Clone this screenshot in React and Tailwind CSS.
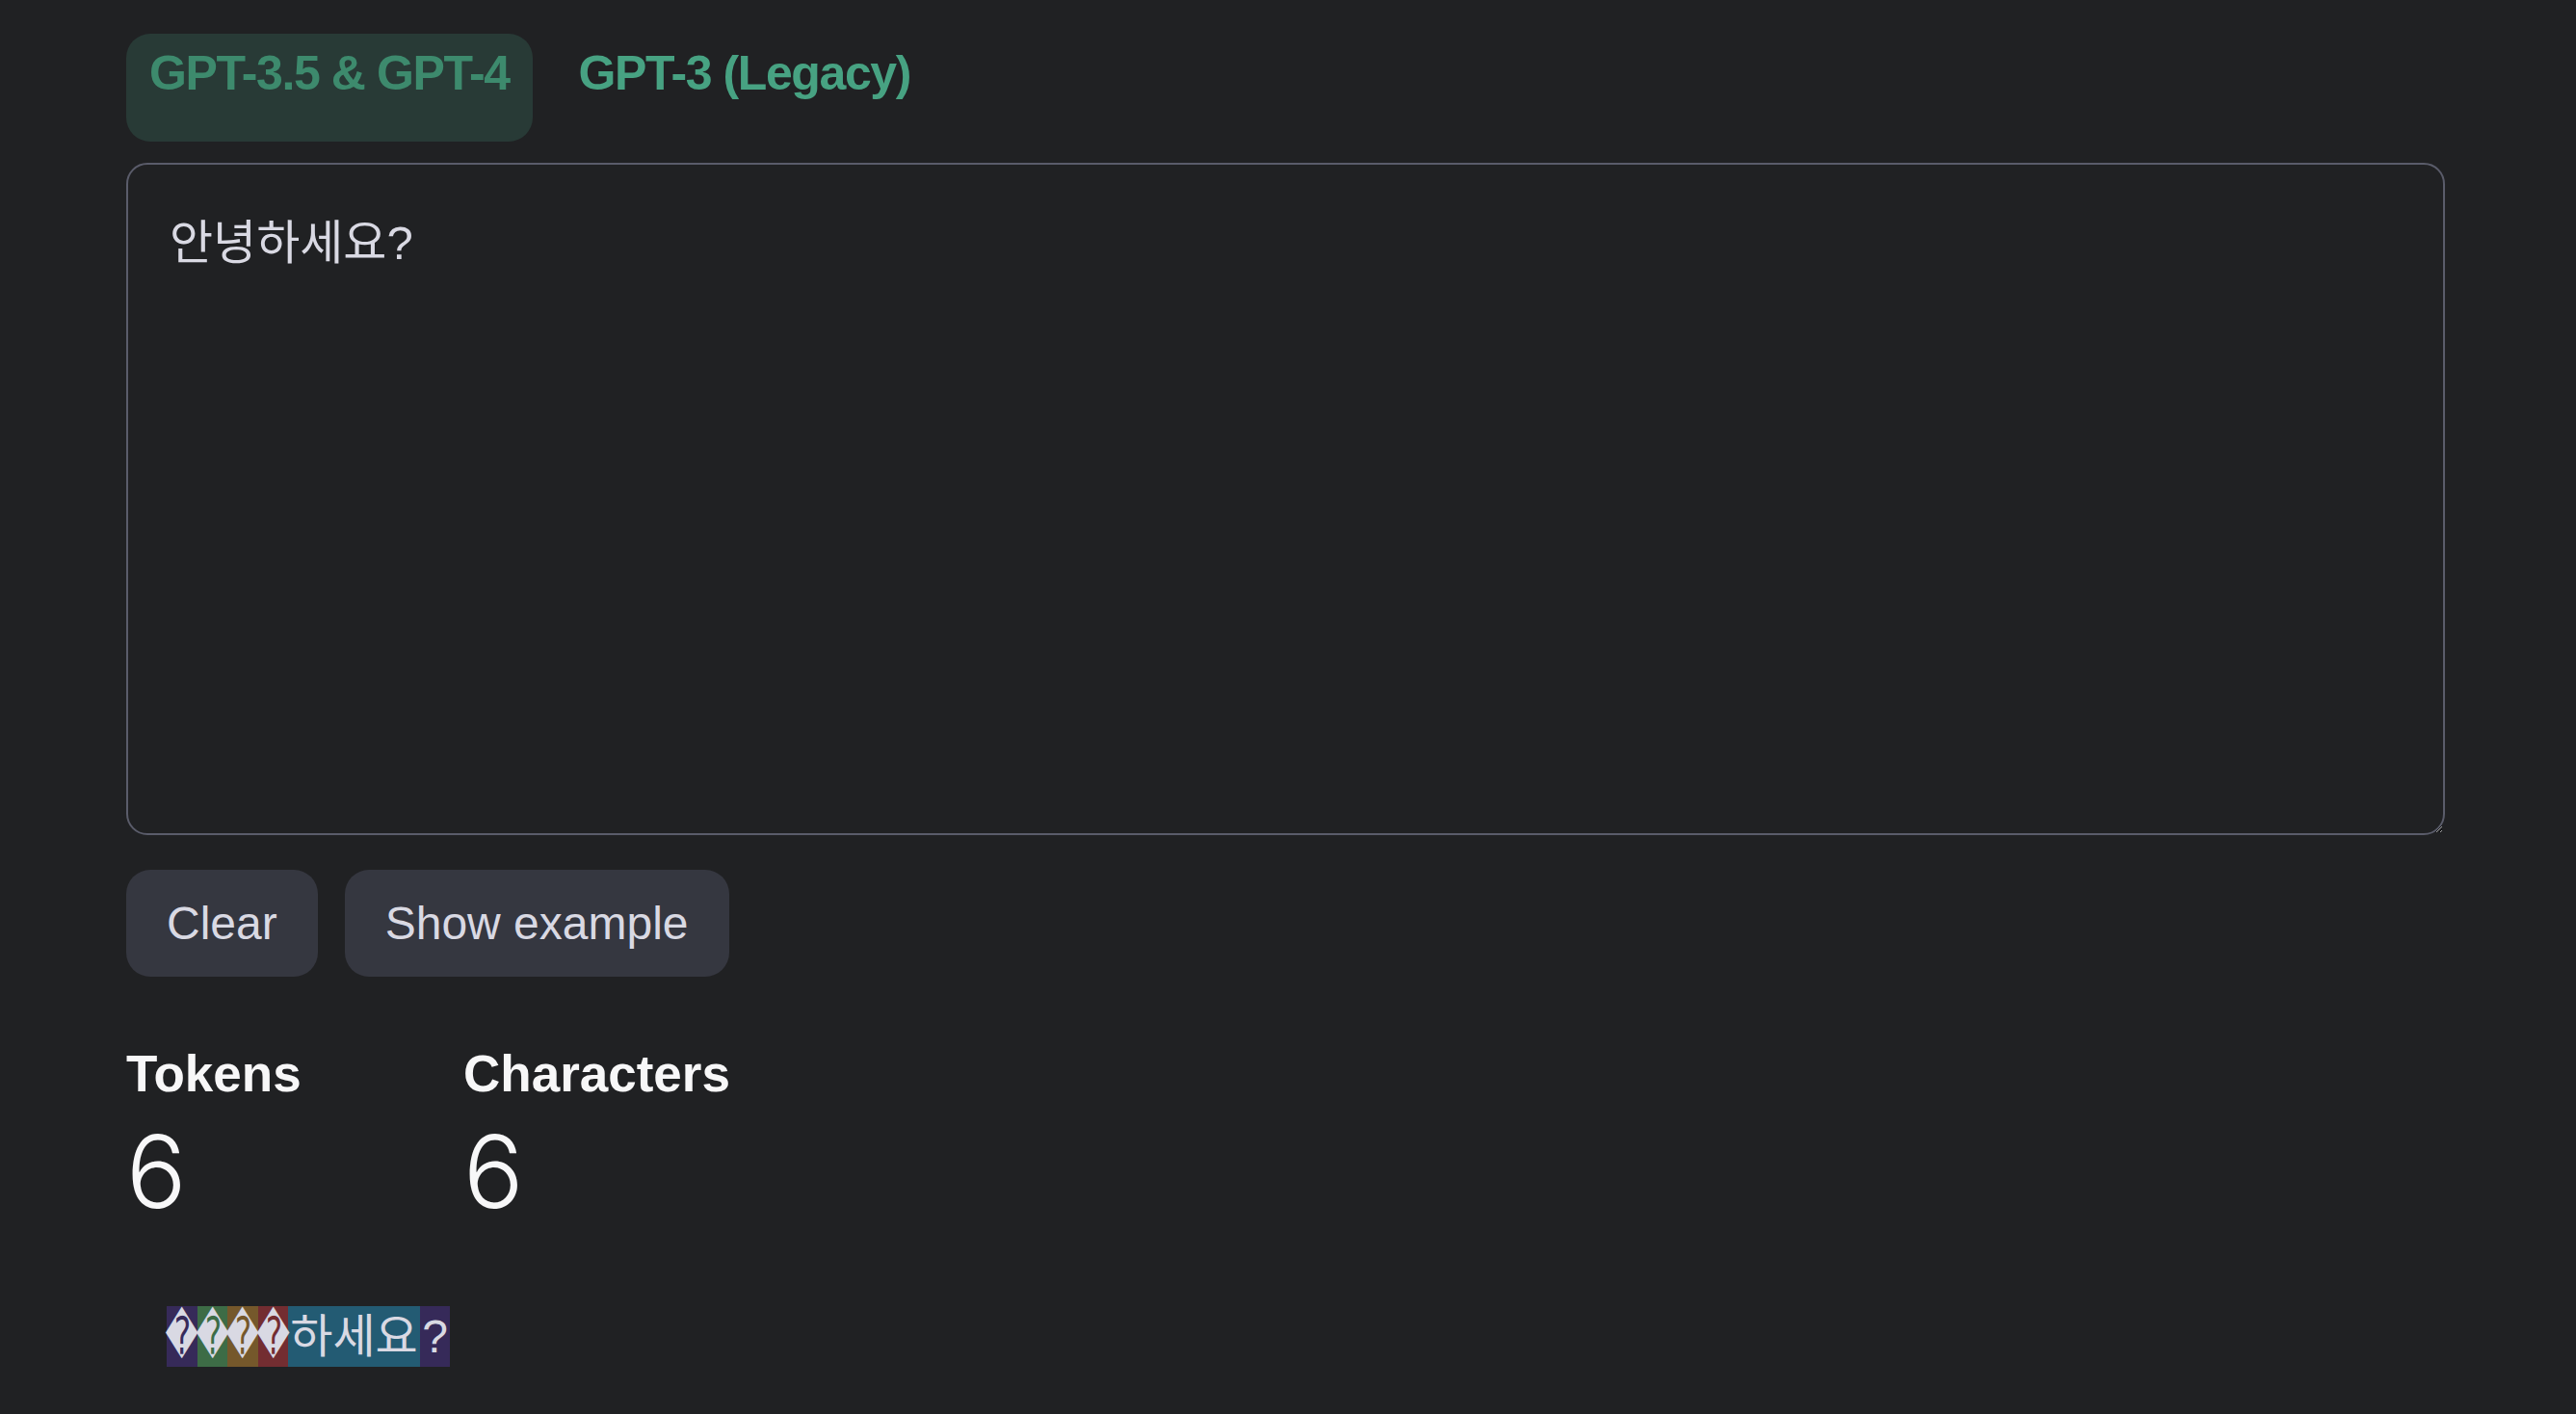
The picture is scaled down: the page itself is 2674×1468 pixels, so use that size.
import { useState } from 'react';

const tokens = [
  { text: '\uFFFD', cls: 'w-[32px] bg-[rgba(107,64,216,0.3)]' },
  { text: '\uFFFD', cls: 'w-[31px] bg-[rgba(104,222,122,0.4)]' },
  { text: '\uFFFD', cls: 'w-[32px] bg-[rgba(244,172,54,0.4)]' },
  { text: '\uFFFD', cls: 'w-[31px] bg-[rgba(239,65,70,0.4)]' },
  { text: '하세요', cls: 'w-[137px] bg-[rgba(39,181,234,0.4)]' },
  { text: '?', cls: 'w-[31px] bg-[rgba(107,64,216,0.3)]' },
];

export default function App() {
  const [tab, setTab] = useState('gpt4');
  const [text, setText] = useState('안녕하세요?');

  return (
    <div className="min-h-screen bg-[#202123] pl-[131px] pt-[35px] font-['Liberation_Sans',Arial,sans-serif]">
      <div className="flex gap-[24px]">
        <button
          onClick={() => setTab('gpt4')}
          className={`h-[112px] px-[24px] pt-[16px] rounded-[25px] text-[50px] leading-[50px] font-bold tracking-[-1.4px] flex items-start ${tab === 'gpt4' ? 'bg-[#283a36] text-[#3d8a6d]' : 'text-[#47a282]'}`}
        >
          GPT-3.5 &amp; GPT-4
        </button>
        <button
          onClick={() => setTab('gpt3')}
          className={`h-[112px] px-[24px] pt-[16px] rounded-[25px] text-[50px] leading-[50px] font-bold tracking-[-1.4px] flex items-start ${tab === 'gpt3' ? 'bg-[#283a36] text-[#3d8a6d]' : 'text-[#47a282]'}`}
        >
          GPT-3 (Legacy)
        </button>
      </div>

      <textarea
        value={text}
        onChange={(e) => setText(e.target.value)}
        className="mt-[22px] block w-[2407px] h-[698px] bg-transparent border-2 border-[#5a5c6a] rounded-[22px] pl-[43px] pt-[45px] pr-[40px] text-[49px] leading-[72px] text-[#d9d9e3] font-['Liberation_Sans','Noto_Sans_CJK_KR',sans-serif] outline-none resize-y"
      />

      <div className="flex gap-[28px] mt-[36px]">
        <button className="h-[111px] px-[42px] rounded-[25px] bg-[#353740] text-[#d9d9e3] text-[48px]">
          Clear
        </button>
        <button className="h-[111px] px-[42px] rounded-[25px] bg-[#353740] text-[#d9d9e3] text-[48px]">
          Show example
        </button>
      </div>

      <div className="flex mt-[74px] text-[#f7f7f8]">
        <div className="w-[350px]">
          <div className="text-[53px] leading-[53px] font-bold">Tokens</div>
          <div className="mt-[23px] text-[104px] leading-[104px] font-light font-['Inter',sans-serif]">6</div>
        </div>
        <div>
          <div className="text-[53px] leading-[53px] font-bold">Characters</div>
          <div className="mt-[23px] text-[104px] leading-[104px] font-light font-['Inter',sans-serif]">6</div>
        </div>
      </div>

      <div className="mt-[88px] ml-[42px] flex font-['Liberation_Sans','Noto_Sans_CJK_KR',sans-serif] text-[48px] text-[#d9d9e3]">
        {tokens.map((t, i) => (
          <span key={i} className={`h-[63px] flex items-center justify-center ${t.cls}`}>
            {t.text === '\uFFFD' ? (
              <span className="inline-block text-[54px] leading-[63px] scale-x-[0.62] font-['DejaVu_Sans',sans-serif]">{t.text}</span>
            ) : (
              <span className="leading-[63px]">{t.text}</span>
            )}
          </span>
        ))}
      </div>
    </div>
  );
}
